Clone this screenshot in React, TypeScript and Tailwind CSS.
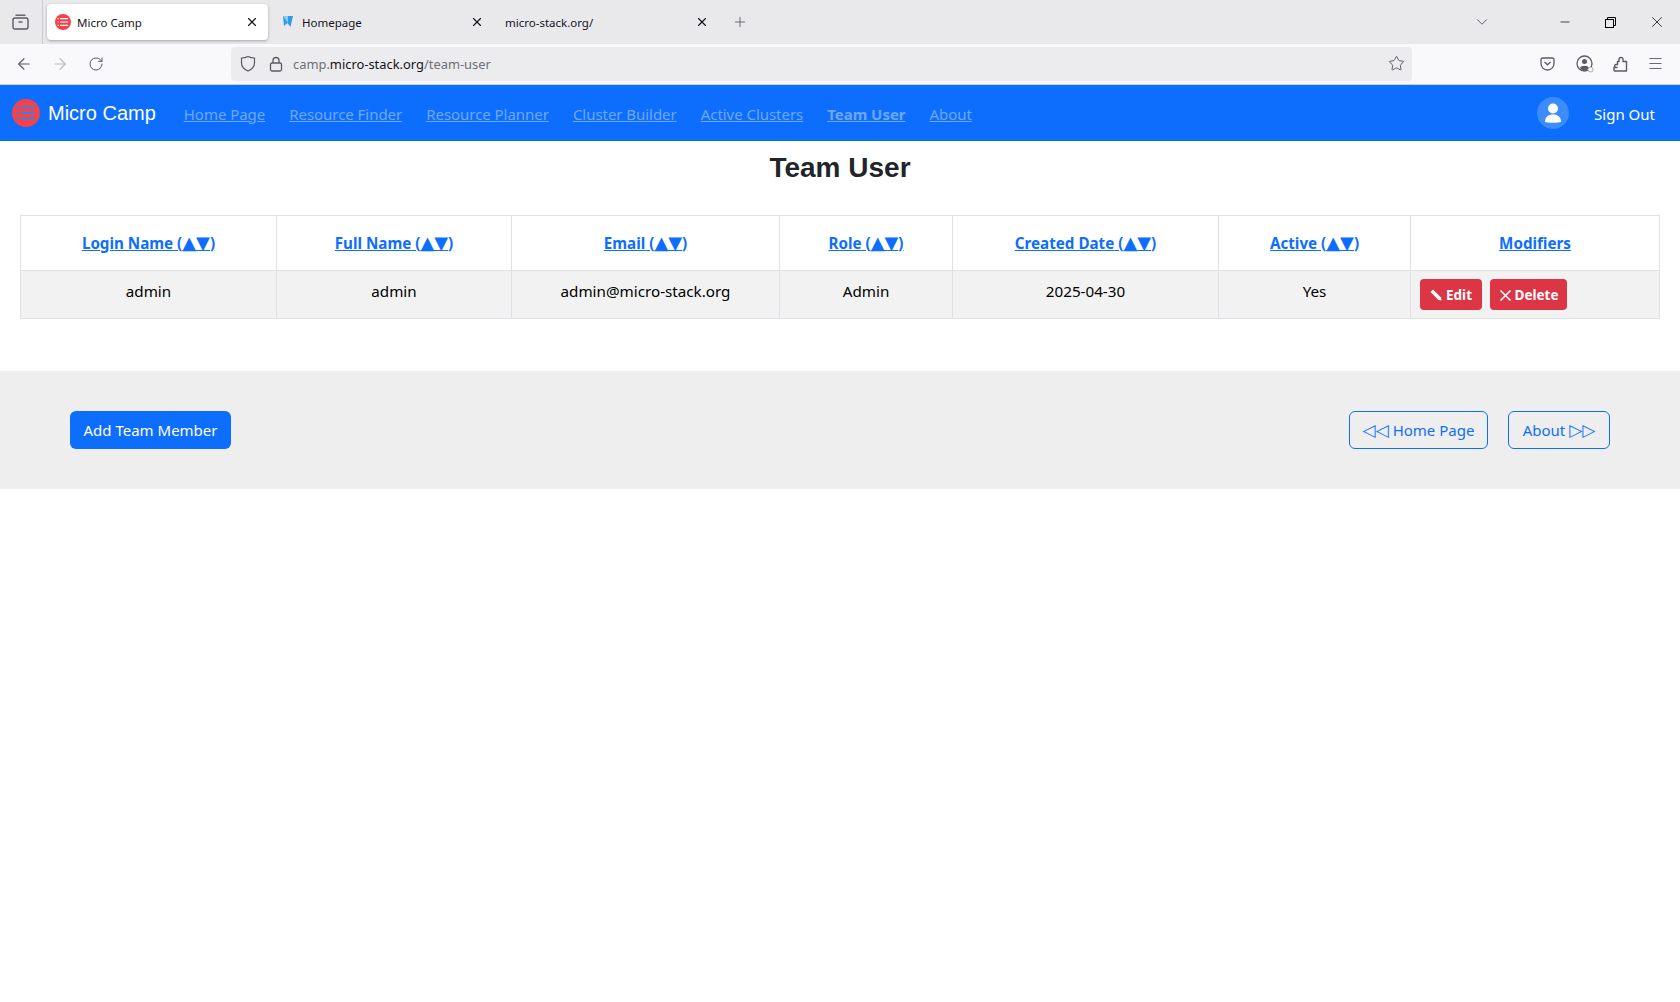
import { ChevronDown, Minus, Plus, RotateCw, Star, X, ArrowLeft, ArrowRight, Menu } from 'lucide-react';

const navLinks = [
  { label: 'Home Page', cls: 'ml-[28px]' },
  { label: 'Resource Finder', cls: 'ml-6' },
  { label: 'Resource Planner', cls: 'ml-6' },
  { label: 'Cluster Builder', cls: 'ml-6' },
  { label: 'Active Clusters', cls: 'ml-6' },
  { label: 'Team User', cls: 'ml-6 font-bold' },
  { label: 'About', cls: 'ml-6' },
];

const columns = [
  { label: 'Login Name', width: 'w-[256px]', value: 'admin' },
  { label: 'Full Name', width: 'w-[235px]', value: 'admin' },
  { label: 'Email', width: 'w-[268px]', value: 'admin@micro-stack.org' },
  { label: 'Role', width: 'w-[173px]', value: 'Admin' },
  { label: 'Created Date', width: 'w-[266px]', value: '2025-04-30' },
  { label: 'Active', width: 'w-[192px]', value: 'Yes' },
];

function LogoMark({ size }: { size: number }) {
  return (
    <svg width={size} height={size} viewBox="0 0 28 28" className="shrink-0">
      <circle cx="14" cy="14" r="14" fill="#f5424a" />
      <g fill="none" stroke="#3d7fe0" strokeWidth="1.8">
        <path d="M8.500 8.500H23M8.500 14H23M8.500 19.500H23" />
        <path d="M4.500 8.500H6.500M4.500 14H6.500M4.500 19.500H6.500" />
      </g>
    </svg>
  );
}

function BrowserChrome() {
  return (
    <div className="font-['Noto_Sans',sans-serif]">
      {/* tab strip */}
      <div className="flex h-11 items-center bg-[#e9e9ec] text-[11.5px] text-[#15141a]">
        <div className="flex h-full w-[43px] shrink-0 items-center justify-center border-r border-[#c9c9cd] pr-[2px]">
          <svg width="17" height="16" viewBox="0 0 17 16" fill="none" stroke="#5b5b66" strokeWidth="1.4">
            <path d="M3.500 1.200h10" />
            <rect x="1" y="4" width="15" height="11" rx="2" />
            <path d="M6.500 8h4" />
          </svg>
        </div>
        <div className="ml-[4px] flex h-[36px] w-[221px] items-center rounded bg-white pl-2 pr-[9px] shadow-[0_1px_3px_rgba(0,0,0,0.3)]">
          <svg width="16" height="16" viewBox="0 0 28 28" className="shrink-0">
            <circle cx="14" cy="14" r="14" fill="#f5424a" />
            <path d="M9 8H23M9 14H23M9 20H23M4.500 8H6.500M4.500 14H6.500M4.500 20H6.500" stroke="#fff" strokeWidth="2" />
          </svg>
          <span className="ml-[6px] flex-1 pt-[2px]">Micro Camp</span>
          <X size={14} strokeWidth={2} />
        </div>
        <div className="flex h-[36px] w-[225px] items-center pl-[12px] pr-[9px]">
          <svg width="16" height="16" viewBox="0 0 16 16" className="shrink-0">
            <path d="M3 2h10l-2.500 11-3-4-3.500 3z" fill="#2f9be8" />
            <path d="M3 2h5v7z" fill="#8ccdf5" />
          </svg>
          <span className="ml-[6px] flex-1 pt-[2px]">Homepage</span>
          <X size={14} strokeWidth={2} />
        </div>
        <div className="flex h-[36px] w-[225px] items-center pl-[12px] pr-[9px]">
          <span className="flex-1 pt-[2px]">micro-stack.org/</span>
          <X size={14} strokeWidth={2} />
        </div>
        <Plus size={16} strokeWidth={1.3} className="ml-[14px] text-[#5b5b66]" />
        <div className="flex-1" />
        <ChevronDown size={18} strokeWidth={1.3} className="mr-[67px] text-[#5b5b66]" />
        <Minus size={14} strokeWidth={1.2} className="mr-[33px] text-black" />
        <svg width="11" height="11" viewBox="0 0 11 11" fill="none" stroke="#000" className="mr-[32px]">
          <rect x="0.5" y="2.5" width="8" height="8" />
          <path d="M2.500 2.500V0.500H10.500V8.500H8.500" />
        </svg>
        <X size={18} strokeWidth={1} className="mr-[14px] text-black" />
      </div>
      {/* url bar */}
      <div className="flex h-[41px] items-center border-b border-[#cfcfd4] bg-[#f9f9fb] pb-px">
        <ArrowLeft size={18} strokeWidth={1.5} className="ml-[15px] text-[#5b5b66]" />
        <ArrowRight size={18} strokeWidth={1.5} className="ml-[18px] text-[#bcbcc2]" />
        <RotateCw size={16} strokeWidth={1.5} className="ml-[19px] text-[#5b5b66]" />
        <div className="ml-[127px] flex h-[34px] w-[1181px] items-center rounded bg-[#ececee] pl-[9px] pr-[7px] text-[12.9px]">
          <svg width="16" height="17" viewBox="0 0 16 17" fill="none" stroke="#5b5b66" strokeWidth="1.2">
            <path d="M8 1.500c2 1 4 1.500 6.500 1.500v5c0 4-3 6.500-6.500 8-3.500-1.500-6.500-4-6.500-8V3c2.500 0 4.500-.5 6.500-1.500z" />
          </svg>
          <svg width="14" height="16" viewBox="0 0 14 16" fill="none" stroke="#5b5b66" strokeWidth="1.3" className="ml-[13px]">
            <rect x="1.500" y="7" width="11" height="8" rx="1.500" />
            <path d="M4 7V4.500a3 3 0 0 1 6 0V7" />
          </svg>
          <span className="ml-[10px] flex-1 pt-[2px] text-[#6f6f78]">
            camp.<span className="text-[#15141a]">micro-stack.org</span>/team-user
          </span>
          <Star size={17} strokeWidth={1.4} className="text-[#5b5b66]" />
        </div>
        <div className="flex-1" />
        <svg width="15" height="14" viewBox="0 0 15 14" fill="none" stroke="#5b5b66" strokeWidth="1.3" className="mr-[21px]">
          <path d="M2.500 1h10A1.500 1.500 0 0 1 14 2.500v4a6.500 6.500 0 0 1-13 0v-4A1.500 1.500 0 0 1 2.500 1z" />
          <path d="M4.500 5l3 2.800 3-2.800" />
        </svg>
        <svg width="18" height="18" viewBox="0 0 18 18" fill="none" className="mr-[19px]">
          <circle cx="8.500" cy="8.500" r="7.500" stroke="#5b5b66" strokeWidth="1.300" />
          <circle cx="8.500" cy="6.500" r="2.500" fill="#5b5b66" />
          <path d="M4 13c1-3 8-3 9 0l-2 2H6z" fill="#5b5b66" />
          <circle cx="14.500" cy="14.500" r="2.500" fill="#f9f9fb" stroke="#a9a9b0" />
        </svg>
        <svg width="15" height="16" viewBox="0 0 15 16" fill="none" stroke="#5b5b66" strokeWidth="1.4" strokeLinejoin="round" className="mr-[19px]">
          <path d="M1 15h12.500V5.500H10V3.500a2 2 0 0 0-4 0v2H4.500v3H3a1.500 1.500 0 0 0 0 3h1.500M1 15v-3.500h3.500" />
        </svg>
        <Menu size={17} strokeWidth={1.3} className="mr-[16px] text-[#5b5b66]" />
      </div>
    </div>
  );
}

function NavBar() {
  return (
    <nav className="flex h-[56px] items-center bg-[#0d6efd] pl-3 text-[15px] font-['Noto_Sans',sans-serif]">
      <LogoMark size={28} />
      <span className="ml-2 font-['Liberation_Sans',sans-serif] text-[20px] text-white">Micro Camp</span>
      {navLinks.map((link) => (
        <a key={link.label} href="#" className={`${link.cls} pt-[2px] tracking-[-0.04px] text-[#6ea8fe] underline`}>
          {link.label}
        </a>
      ))}
      <div className="flex-1" />
      <div className="flex h-8 w-8 items-center justify-center rounded-full bg-[#3d8bfd]">
        <svg width="18" height="20" viewBox="0 0 18 20" fill="#fff">
          <circle cx="9" cy="5.500" r="5" />
          <path d="M1 19c0-5 3-7.500 8-7.500s8 2.500 8 7.500c-2 1-14 1-16 0z" />
        </svg>
      </div>
      <a href="#" className="mr-[25px] ml-[25px] pt-[2px] text-white">Sign Out</a>
    </nav>
  );
}

function SortLink({ label }: { label: string }) {
  return (
    <a href="#" className="text-[#0d6efd] underline">
      {label} (<span className="font-['DejaVu_Sans',sans-serif] text-[18px] leading-none font-normal">▲▼</span>)
    </a>
  );
}

function UserTable() {
  return (
    <table className="mx-5 mt-[31px] w-[1640px] table-fixed border-collapse text-center text-[15.2px] font-['Noto_Sans',sans-serif]">
      <thead>
        <tr className="h-[55px]">
          {columns.map((c) => (
            <th key={c.label} className={`${c.width} border border-[#dee2e6]`}>
              <SortLink label={c.label} />
            </th>
          ))}
          <th className="border border-[#dee2e6]">
            <a href="#" className="text-[#0d6efd] underline">Modifiers</a>
          </th>
        </tr>
      </thead>
      <tbody>
        <tr className="h-[48px] bg-[#f2f2f2]">
          {columns.map((c) => (
            <td key={c.label} className="border border-[#dee2e6] pb-[7px] text-black">{c.value}</td>
          ))}
          <td className="border border-[#dee2e6] pl-[9px] text-left">
            <div className="flex gap-2">
              <button className="flex h-[31px] w-[62px] items-center justify-center gap-[4px] rounded bg-[#dc3545] pt-px text-[13.5px] font-bold text-white">
                <svg width="12" height="12" viewBox="0 0 12 12" fill="#fff">
                  <path d="M3 .5L.5 3 8.500 11 11.500 11.500 11 8.500z" />
                </svg>
                Edit
              </button>
              <button className="flex h-[31px] w-[77px] items-center justify-center gap-[3px] rounded bg-[#dc3545] pt-px text-[13.5px] font-bold text-white">
                <svg width="13" height="13" viewBox="0 0 13 13" fill="none" stroke="#fff" strokeWidth="1.600">
                  <path d="M1.500 1.500L11.500 11.500M11.500 1.500L1.500 11.500" />
                </svg>
                Delete
              </button>
            </div>
          </td>
        </tr>
      </tbody>
    </table>
  );
}

function FooterBar() {
  return (
    <div className="mt-[52px] flex h-[118px] items-center bg-[#eeeeee] px-[70px] text-[15px] font-['Noto_Sans',sans-serif]">
      <button className="h-[38px] w-[161px] rounded-md bg-[#0d6efd] text-white">Add Team Member</button>
      <div className="flex-1" />
      <button className="h-[38px] w-[139px] rounded-md border border-[#0d6efd] text-[#0d6efd]">
        <span className="font-['DejaVu_Sans',sans-serif] text-[17px] leading-none">◁◁</span> Home Page
      </button>
      <button className="ml-5 h-[38px] w-[102px] rounded-md border border-[#0d6efd] text-[#0d6efd]">
        About <span className="font-['DejaVu_Sans',sans-serif] text-[17px] leading-none">▷▷</span>
      </button>
    </div>
  );
}

export default function App() {
  return (
    <div className="min-h-[1002px] bg-white">
      <BrowserChrome />
      <NavBar />
      <h1 className="mt-[10px] text-center font-['Liberation_Sans',sans-serif] text-[28px] leading-[33px] font-bold text-[#212529]">
        Team User
      </h1>
      <UserTable />
      <FooterBar />
    </div>
  );
}
